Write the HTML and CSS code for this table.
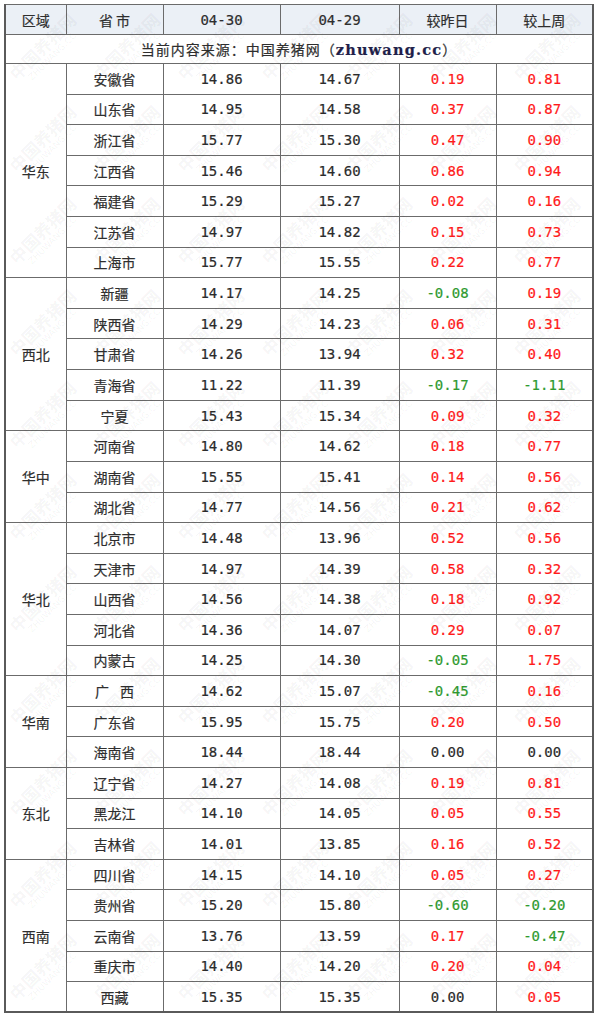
FILE: index.html
```html
<!DOCTYPE html>
<html lang="zh-CN">
<head>
<meta charset="utf-8">
<title>生猪价格</title>
<link rel="stylesheet" href="styles.css">
</head>
<body>
<div class="wrap">
<table class="price">
<colgroup>
<col class="w-region"><col class="w-prov"><col class="w-d1"><col class="w-d2"><col class="w-chg"><col class="w-chg">
</colgroup>
<thead>
<tr><th>区域</th><th>省 市</th><th class="num">04-30</th><th class="num">04-29</th><th>较昨日</th><th>较上周</th></tr>
</thead>
<tbody>
<tr class="src"><td colspan="6">当前内容来源：中国养猪网（<b class="site">zhuwang.cc</b>）</td></tr>
<tr><td class="region" rowspan="7">华东</td><td>安徽省</td><td class="num">14.86</td><td class="num">14.67</td><td class="num up">0.19</td><td class="num up">0.81</td></tr>
<tr><td>山东省</td><td class="num">14.95</td><td class="num">14.58</td><td class="num up">0.37</td><td class="num up">0.87</td></tr>
<tr><td>浙江省</td><td class="num">15.77</td><td class="num">15.30</td><td class="num up">0.47</td><td class="num up">0.90</td></tr>
<tr><td>江西省</td><td class="num">15.46</td><td class="num">14.60</td><td class="num up">0.86</td><td class="num up">0.94</td></tr>
<tr><td>福建省</td><td class="num">15.29</td><td class="num">15.27</td><td class="num up">0.02</td><td class="num up">0.16</td></tr>
<tr><td>江苏省</td><td class="num">14.97</td><td class="num">14.82</td><td class="num up">0.15</td><td class="num up">0.73</td></tr>
<tr><td>上海市</td><td class="num">15.77</td><td class="num">15.55</td><td class="num up">0.22</td><td class="num up">0.77</td></tr>
<tr><td class="region" rowspan="5">西北</td><td>新疆</td><td class="num">14.17</td><td class="num">14.25</td><td class="num down">-0.08</td><td class="num up">0.19</td></tr>
<tr><td>陕西省</td><td class="num">14.29</td><td class="num">14.23</td><td class="num up">0.06</td><td class="num up">0.31</td></tr>
<tr><td>甘肃省</td><td class="num">14.26</td><td class="num">13.94</td><td class="num up">0.32</td><td class="num up">0.40</td></tr>
<tr><td>青海省</td><td class="num">11.22</td><td class="num">11.39</td><td class="num down">-0.17</td><td class="num down">-1.11</td></tr>
<tr><td>宁夏</td><td class="num">15.43</td><td class="num">15.34</td><td class="num up">0.09</td><td class="num up">0.32</td></tr>
<tr><td class="region" rowspan="3">华中</td><td>河南省</td><td class="num">14.80</td><td class="num">14.62</td><td class="num up">0.18</td><td class="num up">0.77</td></tr>
<tr><td>湖南省</td><td class="num">15.55</td><td class="num">15.41</td><td class="num up">0.14</td><td class="num up">0.56</td></tr>
<tr><td>湖北省</td><td class="num">14.77</td><td class="num">14.56</td><td class="num up">0.21</td><td class="num up">0.62</td></tr>
<tr><td class="region" rowspan="5">华北</td><td>北京市</td><td class="num">14.48</td><td class="num">13.96</td><td class="num up">0.52</td><td class="num up">0.56</td></tr>
<tr><td>天津市</td><td class="num">14.97</td><td class="num">14.39</td><td class="num up">0.58</td><td class="num up">0.32</td></tr>
<tr><td>山西省</td><td class="num">14.56</td><td class="num">14.38</td><td class="num up">0.18</td><td class="num up">0.92</td></tr>
<tr><td>河北省</td><td class="num">14.36</td><td class="num">14.07</td><td class="num up">0.29</td><td class="num up">0.07</td></tr>
<tr><td>内蒙古</td><td class="num">14.25</td><td class="num">14.30</td><td class="num down">-0.05</td><td class="num up">1.75</td></tr>
<tr><td class="region" rowspan="3">华南</td><td>广<span class="gap"></span>西</td><td class="num">14.62</td><td class="num">15.07</td><td class="num down">-0.45</td><td class="num up">0.16</td></tr>
<tr><td>广东省</td><td class="num">15.95</td><td class="num">15.75</td><td class="num up">0.20</td><td class="num up">0.50</td></tr>
<tr><td>海南省</td><td class="num">18.44</td><td class="num">18.44</td><td class="num">0.00</td><td class="num">0.00</td></tr>
<tr><td class="region" rowspan="3">东北</td><td>辽宁省</td><td class="num">14.27</td><td class="num">14.08</td><td class="num up">0.19</td><td class="num up">0.81</td></tr>
<tr><td>黑龙江</td><td class="num">14.10</td><td class="num">14.05</td><td class="num up">0.05</td><td class="num up">0.55</td></tr>
<tr><td>吉林省</td><td class="num">14.01</td><td class="num">13.85</td><td class="num up">0.16</td><td class="num up">0.52</td></tr>
<tr><td class="region" rowspan="5">西南</td><td>四川省</td><td class="num">14.15</td><td class="num">14.10</td><td class="num up">0.05</td><td class="num up">0.27</td></tr>
<tr><td>贵州省</td><td class="num">15.20</td><td class="num">15.80</td><td class="num down">-0.60</td><td class="num down">-0.20</td></tr>
<tr><td>云南省</td><td class="num">13.76</td><td class="num">13.59</td><td class="num up">0.17</td><td class="num down">-0.47</td></tr>
<tr><td>重庆市</td><td class="num">14.40</td><td class="num">14.20</td><td class="num up">0.20</td><td class="num up">0.04</td></tr>
<tr><td>西藏</td><td class="num">15.35</td><td class="num">15.35</td><td class="num">0.00</td><td class="num up">0.05</td></tr>
</tbody>
</table>
<div class="wm" aria-hidden="true">
<div class="mark"><span class="cn">中国养猪网</span><span class="en">ZHUWANG.CC</span></div>
<div class="mark"><span class="cn">中国养猪网</span><span class="en">ZHUWANG.CC</span></div>
<div class="mark"><span class="cn">中国养猪网</span><span class="en">ZHUWANG.CC</span></div>
<div class="mark"><span class="cn">中国养猪网</span><span class="en">ZHUWANG.CC</span></div>
<div class="mark"><span class="cn">中国养猪网</span><span class="en">ZHUWANG.CC</span></div>
<div class="mark"><span class="cn">中国养猪网</span><span class="en">ZHUWANG.CC</span></div>
<div class="mark"><span class="cn">中国养猪网</span><span class="en">ZHUWANG.CC</span></div>
<div class="mark"><span class="cn">中国养猪网</span><span class="en">ZHUWANG.CC</span></div>
<div class="mark"><span class="cn">中国养猪网</span><span class="en">ZHUWANG.CC</span></div>
<div class="mark"><span class="cn">中国养猪网</span><span class="en">ZHUWANG.CC</span></div>
<div class="mark"><span class="cn">中国养猪网</span><span class="en">ZHUWANG.CC</span></div>
<div class="mark"><span class="cn">中国养猪网</span><span class="en">ZHUWANG.CC</span></div>
<div class="mark"><span class="cn">中国养猪网</span><span class="en">ZHUWANG.CC</span></div>
<div class="mark"><span class="cn">中国养猪网</span><span class="en">ZHUWANG.CC</span></div>
<div class="mark"><span class="cn">中国养猪网</span><span class="en">ZHUWANG.CC</span></div>
<div class="mark"><span class="cn">中国养猪网</span><span class="en">ZHUWANG.CC</span></div>
<div class="mark"><span class="cn">中国养猪网</span><span class="en">ZHUWANG.CC</span></div>
<div class="mark"><span class="cn">中国养猪网</span><span class="en">ZHUWANG.CC</span></div>
<div class="mark"><span class="cn">中国养猪网</span><span class="en">ZHUWANG.CC</span></div>
<div class="mark"><span class="cn">中国养猪网</span><span class="en">ZHUWANG.CC</span></div>
<div class="mark"><span class="cn">中国养猪网</span><span class="en">ZHUWANG.CC</span></div>
<div class="mark"><span class="cn">中国养猪网</span><span class="en">ZHUWANG.CC</span></div>
<div class="mark"><span class="cn">中国养猪网</span><span class="en">ZHUWANG.CC</span></div>
<div class="mark"><span class="cn">中国养猪网</span><span class="en">ZHUWANG.CC</span></div>
<div class="mark"><span class="cn">中国养猪网</span><span class="en">ZHUWANG.CC</span></div>
<div class="mark"><span class="cn">中国养猪网</span><span class="en">ZHUWANG.CC</span></div>
<div class="mark"><span class="cn">中国养猪网</span><span class="en">ZHUWANG.CC</span></div>
<div class="mark"><span class="cn">中国养猪网</span><span class="en">ZHUWANG.CC</span></div>
<div class="mark"><span class="cn">中国养猪网</span><span class="en">ZHUWANG.CC</span></div>
<div class="mark"><span class="cn">中国养猪网</span><span class="en">ZHUWANG.CC</span></div>
<div class="mark"><span class="cn">中国养猪网</span><span class="en">ZHUWANG.CC</span></div>
<div class="mark"><span class="cn">中国养猪网</span><span class="en">ZHUWANG.CC</span></div>
<div class="mark"><span class="cn">中国养猪网</span><span class="en">ZHUWANG.CC</span></div>
<div class="mark"><span class="cn">中国养猪网</span><span class="en">ZHUWANG.CC</span></div>
<div class="mark"><span class="cn">中国养猪网</span><span class="en">ZHUWANG.CC</span></div>
<div class="mark"><span class="cn">中国养猪网</span><span class="en">ZHUWANG.CC</span></div>
<div class="mark"><span class="cn">中国养猪网</span><span class="en">ZHUWANG.CC</span></div>
<div class="mark"><span class="cn">中国养猪网</span><span class="en">ZHUWANG.CC</span></div>
<div class="mark"><span class="cn">中国养猪网</span><span class="en">ZHUWANG.CC</span></div>
<div class="mark"><span class="cn">中国养猪网</span><span class="en">ZHUWANG.CC</span></div>
<div class="mark"><span class="cn">中国养猪网</span><span class="en">ZHUWANG.CC</span></div>
<div class="mark"><span class="cn">中国养猪网</span><span class="en">ZHUWANG.CC</span></div>
<div class="mark"><span class="cn">中国养猪网</span><span class="en">ZHUWANG.CC</span></div>
<div class="mark"><span class="cn">中国养猪网</span><span class="en">ZHUWANG.CC</span></div>
<div class="mark"><span class="cn">中国养猪网</span><span class="en">ZHUWANG.CC</span></div>
<div class="mark"><span class="cn">中国养猪网</span><span class="en">ZHUWANG.CC</span></div>
<div class="mark"><span class="cn">中国养猪网</span><span class="en">ZHUWANG.CC</span></div>
<div class="mark"><span class="cn">中国养猪网</span><span class="en">ZHUWANG.CC</span></div>
<div class="mark"><span class="cn">中国养猪网</span><span class="en">ZHUWANG.CC</span></div>
<div class="mark"><span class="cn">中国养猪网</span><span class="en">ZHUWANG.CC</span></div>
<div class="mark"><span class="cn">中国养猪网</span><span class="en">ZHUWANG.CC</span></div>
<div class="mark"><span class="cn">中国养猪网</span><span class="en">ZHUWANG.CC</span></div>
<div class="mark"><span class="cn">中国养猪网</span><span class="en">ZHUWANG.CC</span></div>
<div class="mark"><span class="cn">中国养猪网</span><span class="en">ZHUWANG.CC</span></div>
<div class="mark"><span class="cn">中国养猪网</span><span class="en">ZHUWANG.CC</span></div>
<div class="mark"><span class="cn">中国养猪网</span><span class="en">ZHUWANG.CC</span></div>
<div class="mark"><span class="cn">中国养猪网</span><span class="en">ZHUWANG.CC</span></div>
<div class="mark"><span class="cn">中国养猪网</span><span class="en">ZHUWANG.CC</span></div>
<div class="mark"><span class="cn">中国养猪网</span><span class="en">ZHUWANG.CC</span></div>
<div class="mark"><span class="cn">中国养猪网</span><span class="en">ZHUWANG.CC</span></div>
<div class="mark"><span class="cn">中国养猪网</span><span class="en">ZHUWANG.CC</span></div>
<div class="mark"><span class="cn">中国养猪网</span><span class="en">ZHUWANG.CC</span></div>
<div class="mark"><span class="cn">中国养猪网</span><span class="en">ZHUWANG.CC</span></div>
<div class="mark"><span class="cn">中国养猪网</span><span class="en">ZHUWANG.CC</span></div>
<div class="mark"><span class="cn">中国养猪网</span><span class="en">ZHUWANG.CC</span></div>
<div class="mark"><span class="cn">中国养猪网</span><span class="en">ZHUWANG.CC</span></div>
<div class="mark"><span class="cn">中国养猪网</span><span class="en">ZHUWANG.CC</span></div>
<div class="mark"><span class="cn">中国养猪网</span><span class="en">ZHUWANG.CC</span></div>
<div class="mark"><span class="cn">中国养猪网</span><span class="en">ZHUWANG.CC</span></div>
<div class="mark"><span class="cn">中国养猪网</span><span class="en">ZHUWANG.CC</span></div>
<div class="mark"><span class="cn">中国养猪网</span><span class="en">ZHUWANG.CC</span></div>
<div class="mark"><span class="cn">中国养猪网</span><span class="en">ZHUWANG.CC</span></div>
<div class="mark"><span class="cn">中国养猪网</span><span class="en">ZHUWANG.CC</span></div>
<div class="mark"><span class="cn">中国养猪网</span><span class="en">ZHUWANG.CC</span></div>
<div class="mark"><span class="cn">中国养猪网</span><span class="en">ZHUWANG.CC</span></div>
<div class="mark"><span class="cn">中国养猪网</span><span class="en">ZHUWANG.CC</span></div>
<div class="mark"><span class="cn">中国养猪网</span><span class="en">ZHUWANG.CC</span></div>
</div>
</div>
</body>
</html>
```

FILE: styles.css
```css
html, body {
  margin: 0;
  padding: 0;
  background: #ffffff;
}

body {
  padding: 4px;
  font-family: "Noto Sans CJK SC", "DejaVu Sans", sans-serif;
  color: #2e2e2e;
}

.wrap {
  position: relative;
  width: 588px;
}

.price {
  width: 588px;
  table-layout: fixed;
  border-collapse: collapse;
  border: 2px solid #5a5a5a;
  border-top-width: 1px;
  font-size: 14px;
  line-height: 16px;
}

.w-region { width: 61px; }
.w-prov { width: 97px; }
.w-d1 { width: 117px; }
.w-d2 { width: 119px; }
.w-chg { width: 97px; }

.price th,
.price td {
  border: 1px solid #6b6b6b;
  padding: 0;
  text-align: center;
  vertical-align: middle;
  font-weight: normal;
  -webkit-text-stroke: 0.2px currentColor;
}

.price thead tr {
  height: 30px;
}

.price th {
  background: #ebf0f6;
  color: #2e2e2e;
}

.price tbody tr {
  height: 30.62px;
}

.price tbody tr.src {
  height: 29px;
}

.src td {
  letter-spacing: 1px;
}

.site {
  font-family: "DejaVu Serif", "Liberation Serif", serif;
  font-weight: bold;
  font-size: 14.5px;
  color: #1f1f4a;
  letter-spacing: 1.2px;
}

.num {
  font-family: "DejaVu Sans Mono", "Liberation Mono", monospace;
  font-size: 14px;
  color: #2b2b2b;
}

.up { color: #ff1a1a; }
.down { color: #2f9a2f; }

.gap {
  display: inline-block;
  width: 11px;
}

.wm {
  position: absolute;
  left: 0;
  top: 0;
  width: 588px;
  height: 1012px;
  pointer-events: none;
  display: grid;
  grid-template-columns: repeat(7, 84px);
  grid-template-rows: repeat(11, 92px);
  font-family: "Noto Sans CJK SC", sans-serif;
}

.mark {
  display: flex;
  flex-direction: column;
  align-items: center;
  justify-content: center;
  transform: rotate(-45deg);
  color: rgba(0, 0, 0, 0.05);
}

.mark .cn {
  font-size: 17px;
  line-height: 18px;
  font-weight: bold;
  white-space: nowrap;
}

.mark .en {
  font-family: "DejaVu Sans", sans-serif;
  font-size: 9px;
  line-height: 11px;
  white-space: nowrap;
}
```
